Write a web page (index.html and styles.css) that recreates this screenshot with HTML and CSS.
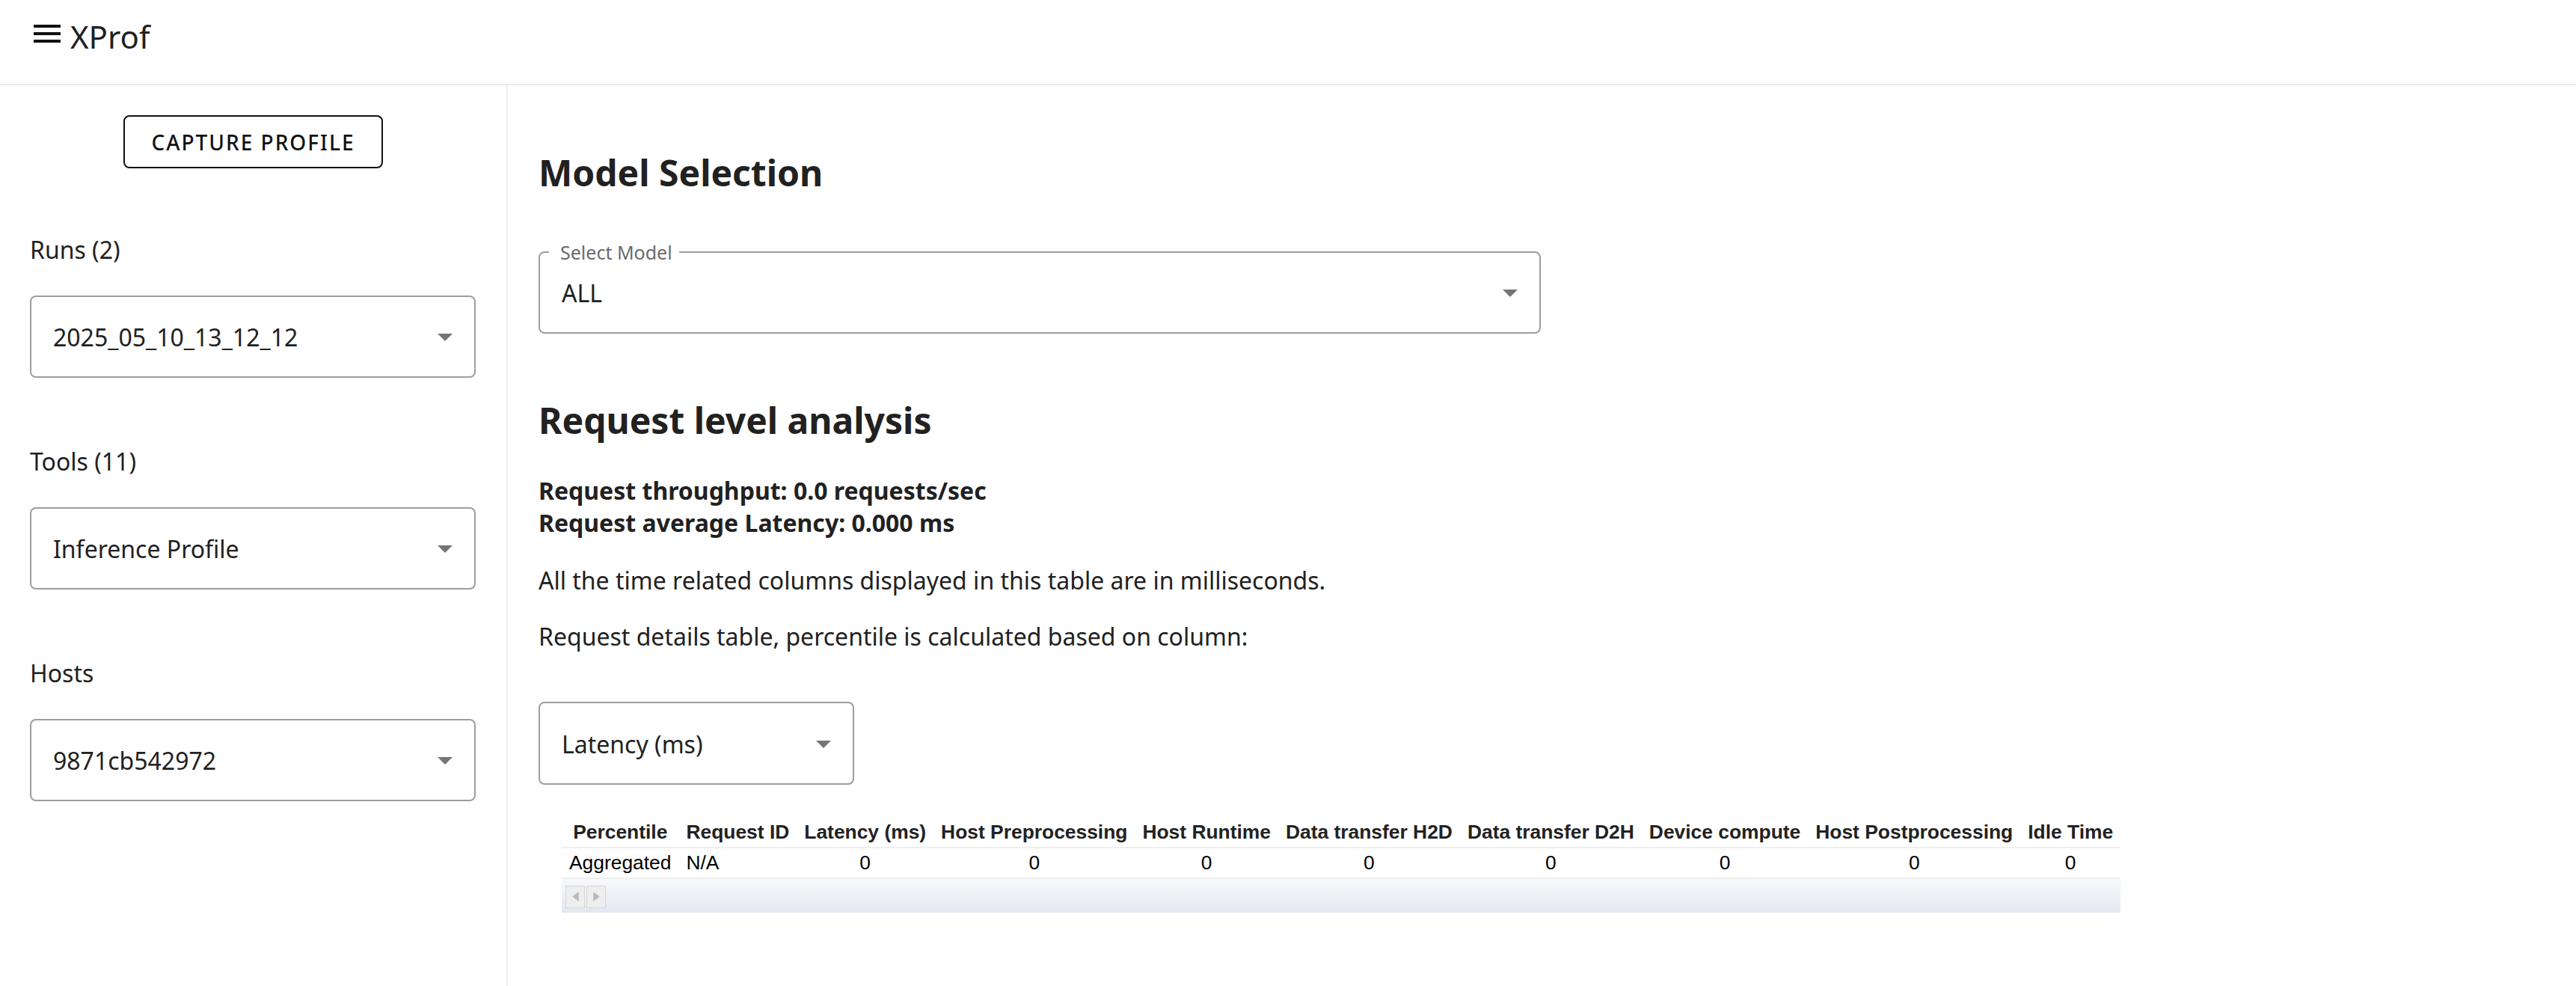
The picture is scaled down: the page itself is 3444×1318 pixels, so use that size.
FILE: index.html
```html
<!DOCTYPE html>
<html lang="en">
<head>
<meta charset="utf-8">
<title>XProf</title>
<link rel="stylesheet" href="styles.css">
</head>
<body>
<header class="topbar">
  <svg class="menu-icon" viewBox="0 0 24 24" width="48" height="48" aria-hidden="true"><path d="M3 18h18v-2H3v2zm0-5h18v-2H3v2zm0-7v2h18V6H3z"/></svg>
  <span class="app-title">XProf</span>
</header>
<div class="layout">
  <aside class="sidebar">
    <button class="capture-btn">CAPTURE PROFILE</button>
    <div class="fields">
      <div class="field">
        <div class="field-label">Runs (2)</div>
        <div class="select"><span>2025_05_10_13_12_12</span><span class="arrow"></span></div>
      </div>
      <div class="field">
        <div class="field-label">Tools (11)</div>
        <div class="select"><span>Inference Profile</span><span class="arrow"></span></div>
      </div>
      <div class="field">
        <div class="field-label">Hosts</div>
        <div class="select"><span>9871cb542972</span><span class="arrow"></span></div>
      </div>
    </div>
  </aside>
  <main class="main">
    <h2 class="section-title first">Model Selection</h2>
    <div class="select outlined model-select">
      <span class="float-label">Select Model</span>
      <span>ALL</span><span class="arrow"></span>
    </div>
    <h2 class="section-title second">Request level analysis</h2>
    <div class="stats">
      <div>Request throughput: 0.0 requests/sec</div>
      <div>Request average Latency: 0.000 ms</div>
    </div>
    <p class="note note-a">All the time related columns displayed in this table are in milliseconds.</p>
    <p class="note note-b">Request details table, percentile is calculated based on column:</p>
    <div class="select column-select"><span>Latency (ms)</span><span class="arrow"></span></div>
    <div class="table-wrap">
      <table class="req-table">
        <thead>
          <tr>
            <th>Percentile</th><th>Request ID</th><th>Latency (ms)</th><th>Host Preprocessing</th><th>Host Runtime</th><th>Data transfer H2D</th><th>Data transfer D2H</th><th>Device compute</th><th>Host Postprocessing</th><th>Idle Time</th>
          </tr>
        </thead>
        <tbody>
          <tr>
            <td class="txt">Aggregated</td><td class="txt">N/A</td><td>0</td><td>0</td><td>0</td><td>0</td><td>0</td><td>0</td><td>0</td><td>0</td>
          </tr>
        </tbody>
      </table>
      <div class="hscroll">
        <span class="sb-btn"><svg viewBox="0 0 8 12" width="9" height="13"><path d="M8 0v12L0 6z"/></svg></span>
        <span class="sb-btn"><svg viewBox="0 0 8 12" width="9" height="13"><path d="M0 0v12l8-6z"/></svg></span>
      </div>
    </div>
  </main>
</div>
</body>
</html>
```
FILE: styles.css
```css
html, body {
  margin: 0;
  padding: 0;
  background: #fff;
}
body {
  font-family: "Noto Sans", "Open Sans", sans-serif;
  color: #212121;
}
.topbar {
  height: 112px;
  border-bottom: 2px solid #eaeaea;
  display: flex;
  align-items: flex-start;
  padding-left: 39px;
}
.menu-icon {
  margin-top: 21px;
  fill: #111;
  flex: none;
}
.app-title {
  margin-top: 28px;
  margin-left: 7px;
  font-size: 42px;
  line-height: 42px;
  color: #212121;
}
.layout {
  display: flex;
  min-height: calc(100vh - 114px);
}
.sidebar {
  width: 677px;
  flex: none;
  border-right: 2px solid #eeeeee;
  padding-top: 40px;
  display: flex;
  flex-direction: column;
  align-items: center;
}
.capture-btn {
  width: 347px;
  height: 71px;
  box-sizing: border-box;
  border: 2px solid #111;
  border-radius: 8px;
  background: #fff;
  font-family: "Noto Sans", sans-serif;
  font-size: 28px;
  font-weight: 500;
  letter-spacing: 2px;
  color: #111;
  padding: 0;
}
.fields {
  align-self: stretch;
  padding: 0 41px 0 40px;
  margin-top: 87px;
  display: flex;
  flex-direction: column;
  gap: 90px;
}
.field-label {
  font-size: 32px;
  line-height: 44px;
  color: #212121;
}
.field .select {
  margin-top: 39px;
}
.select {
  position: relative;
  display: flex;
  align-items: center;
  justify-content: space-between;
  height: 110px;
  box-sizing: border-box;
  border: 2px solid #9e9e9e;
  border-radius: 8px;
  padding: 2px 29px 0 29px;
  font-size: 32px;
  line-height: 44px;
  color: #212121;
}
.arrow {
  width: 0;
  height: 0;
  border-left: 10px solid transparent;
  border-right: 10px solid transparent;
  border-top: 10px solid #757575;
  flex: none;
}
.main {
  flex: 1;
  padding-left: 41px;
  min-width: 0;
}
.section-title {
  font-size: 48px;
  line-height: 65px;
  font-weight: 700;
  margin: 0;
  color: #212121;
}
.section-title.first {
  margin-top: 84px;
}
.model-select {
  margin-top: 73px;
  width: 1340px;
}
.float-label {
  position: absolute;
  left: 12px;
  top: -13px;
  padding: 0 9px 0 15px;
  background: #fff;
  font-size: 25px;
  line-height: 24px;
  color: #6b6b6b;
}
.section-title.second {
  margin-top: 83px;
}
.stats {
  margin-top: 40px;
  font-size: 32px;
  line-height: 43px;
  font-weight: 700;
}
.note {
  font-size: 32px;
  line-height: 44px;
  margin: 0;
}
.note-a {
  margin-top: 34px;
}
.note-b {
  margin-top: 31px;
}
.column-select {
  margin-top: 65px;
  width: 422px;
  height: 111px;
}
.table-wrap {
  display: inline-block;
  margin-top: 44px;
  margin-left: 31px;
}
.req-table {
  border-collapse: collapse;
  font-family: "Liberation Sans", Arial, sans-serif;
  font-size: 26.4px;
  line-height: 31px;
  color: #000;
}
.req-table th {
  font-weight: 700;
  color: #222;
  padding: 4px 10px;
  text-align: center;
  white-space: nowrap;
  border-bottom: 2px solid #eeeeee;
}
.req-table td {
  padding: 4px 10px;
  text-align: center;
  white-space: nowrap;
  border-bottom: 2px solid #eeeeee;
}
.req-table td.txt {
  text-align: left;
}
.hscroll {
  height: 45px;
  background: linear-gradient(#f8f9fb, #e3e7f2);
  display: flex;
  align-items: center;
  gap: 2px;
  padding-left: 5px;
  padding-top: 2px;
  box-sizing: border-box;
}
.sb-btn {
  width: 26px;
  height: 30px;
  box-sizing: border-box;
  border: 1px solid #d6d6d6;
  background: #eeeeee;
  display: flex;
  align-items: center;
  justify-content: center;
}
.sb-btn svg {
  fill: #b9b9b9;
}
```
